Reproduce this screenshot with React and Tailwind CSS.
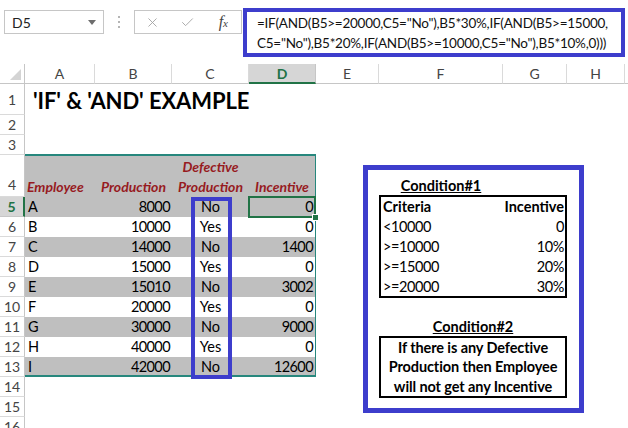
import React from "react";
import { X, Check } from "lucide-react";

const colHeads = [
  { t: "A", cls: "col-start-2" },
  { t: "B", cls: "col-start-3" },
  { t: "C", cls: "col-start-4" },
  { t: "D", cls: "col-start-5", sel: true },
  { t: "E", cls: "col-start-6" },
  { t: "F", cls: "col-start-7" },
  { t: "G", cls: "col-start-8" },
  { t: "H", cls: "col-start-9" },
];

const rowHeads = [
  { t: "1", cls: "row-start-2" },
  { t: "2", cls: "row-start-3" },
  { t: "3", cls: "row-start-4" },
  { t: "4", cls: "row-start-5", tall: true },
  { t: "5", cls: "row-start-6", sel: true },
  { t: "6", cls: "row-start-7" },
  { t: "7", cls: "row-start-8" },
  { t: "8", cls: "row-start-9" },
  { t: "9", cls: "row-start-10" },
  { t: "10", cls: "row-start-11" },
  { t: "11", cls: "row-start-12" },
  { t: "12", cls: "row-start-13" },
  { t: "13", cls: "row-start-14" },
  { t: "14", cls: "row-start-15" },
  { t: "15", cls: "row-start-16" },
  { t: "16", cls: "row-start-17" },
];

const data = [
  { e: "A", p: "8000", d: "No", i: "0", gray: true, cls: "row-start-6", sel: true },
  { e: "B", p: "10000", d: "Yes", i: "0", cls: "row-start-7" },
  { e: "C", p: "14000", d: "No", i: "1400", gray: true, cls: "row-start-8" },
  { e: "D", p: "15000", d: "Yes", i: "0", cls: "row-start-9" },
  { e: "E", p: "15010", d: "No", i: "3002", gray: true, cls: "row-start-10" },
  { e: "F", p: "20000", d: "Yes", i: "0", cls: "row-start-11" },
  { e: "G", p: "30000", d: "No", i: "9000", gray: true, cls: "row-start-12" },
  { e: "H", p: "40000", d: "Yes", i: "0", cls: "row-start-13" },
  { e: "I", p: "42000", d: "No", i: "12600", gray: true, cls: "row-start-14", last: true },
];

const criteria = [
  ["<10000", "0"],
  [">=10000", "10%"],
  [">=15000", "20%"],
  [">=20000", "30%"],
];

export default function App() {
  return (
    <div className="w-[628px] h-[428px] overflow-hidden bg-white text-black font-[family-name:Lato,sans-serif] text-[14px]">
      {/* Formula bar */}
      <div className="h-[64px] flex items-start">
        <div className="mt-[10px] ml-[4px] w-[100px] h-[24px] border border-[#c6c6c6] flex items-center justify-between pl-[7px] pr-[7px]">
          <span className="text-[14px] text-[#222]">D5</span>
          <svg width="8" height="5" viewBox="0 0 8 5">
            <path d="M0 0H8L4 5Z" fill="#6d6d6d" />
          </svg>
        </div>
        <div className="mt-[16px] ml-[14px] flex flex-col gap-[3px]">
          <div className="w-[2px] h-[2px] bg-[#b5b5b5]" />
          <div className="w-[2px] h-[2px] bg-[#b5b5b5]" />
          <div className="w-[2px] h-[2px] bg-[#b5b5b5]" />
        </div>
        <div className="mt-[10px] ml-[14px] w-[108px] h-[24px] border border-[#c6c6c6] flex items-center">
          <div className="w-[36px] flex justify-center">
            <X size={15} strokeWidth={1.4} color="#a0a0a0" />
          </div>
          <div className="w-[36px] flex justify-center">
            <Check size={15} strokeWidth={1.4} color="#a0a0a0" />
          </div>
          <div className="w-[36px] flex justify-center items-baseline font-[family-name:'Liberation_Serif',serif] italic text-[#444]">
            <span className="text-[16px]">f</span>
            <span className="text-[11px]">x</span>
          </div>
        </div>
        <div className="mt-[8px] ml-[1px] w-[382px] h-[49px] border-4 border-[#3d3dcc] pl-[10px] pt-[1px] text-[13.5px] leading-[20px] text-[#111] tracking-[-0.25px]">
          <div>=IF(AND(B5&gt;=20000,C5="No"),B5*30%,IF(AND(B5&gt;=15000,</div>
          <div>C5="No"),B5*20%,IF(AND(B5&gt;=10000,C5="No"),B5*10%,0)))</div>
        </div>
      </div>

      {/* Sheet grid */}
      <div className="grid grid-cols-[25px_70px_77px_77px_67px_63px_124px_64px_58px_1fr] grid-rows-[20px_31px_20px_20px_42px_repeat(12,20px)]">
        {/* corner */}
        <div className="col-start-1 row-start-1 border-r border-b border-[#c6c6c6] flex items-end justify-end pr-[3px] pb-[3px]">
          <svg width="11" height="11" viewBox="0 0 11 11">
            <path d="M11 0V11H0Z" fill="#d4d4d4" />
          </svg>
        </div>

        {colHeads.map((c) => (
          <div
            key={c.t}
            className={
              c.cls +
              " row-start-1 flex items-center justify-center text-[14px] " +
              (c.sel
                ? "bg-[#d6d6d6] border-b-2 border-b-[#217346] border-r border-r-[#c6c6c6] font-bold text-[#217346]"
                : "border-b border-b-[#c6c6c6] border-r border-r-[#dadada] text-[#444]")
            }
          >
            {c.t}
          </div>
        ))}
        <div className="col-start-10 row-start-1 border-b border-[#c6c6c6]" />

        {rowHeads.map((r) => (
          <div
            key={r.t}
            className={
              r.cls +
              " col-start-1 flex justify-center text-[14px] " +
              (r.tall ? "items-end pb-[1px] " : "items-center ") +
              (r.sel
                ? "bg-[#d6d6d6] border-r-2 border-r-[#217346] border-b border-b-[#c6c6c6] font-bold text-[#217346]"
                : "border-r border-r-[#c6c6c6] border-b border-b-[#dadada] text-[#444]")
            }
          >
            {r.t}
          </div>
        ))}

        {/* title */}
        <div className="col-start-2 col-span-6 row-start-2 flex items-center pl-[8px] pt-[1px] text-[22px] font-bold whitespace-nowrap tracking-[-0.1px]">
          'IF' &amp; 'AND' EXAMPLE
        </div>

        {/* table header */}
        <div className="col-start-2 col-span-4 row-start-5 -mt-[1px] grid grid-cols-[70px_77px_77px_1fr] bg-[#bfbfbf] border-t-2 border-r border-[#27877d] items-end font-bold italic text-[#971b1f] leading-[20px] text-[14px]">
          <div className="pl-[2px]">Employee</div>
          <div className="text-center">Production</div>
          <div className="text-center">
            <div>Defective</div>
            <div>Production</div>
          </div>
          <div className="text-center">Incentive</div>
        </div>

        {/* table rows */}
        {data.map((r) => (
          <div
            key={r.e}
            className={
              r.cls +
              " col-start-2 col-span-4 grid grid-cols-[70px_77px_77px_1fr] items-center leading-[20px] border-r border-[#27877d] text-[14.5px] " +
              (r.gray ? "bg-[#bfbfbf] " : "bg-white ") +
              (r.last ? "border-b-2" : "")
            }
          >
            <div className="pl-[3px]">{r.e}</div>
            <div className="text-right pr-[2px] tracking-[-0.6px]">{r.p}</div>
            <div className="text-center">{r.d}</div>
            {r.sel ? (
              <div className="relative h-full flex items-center justify-end pr-[2px] tracking-[-0.6px]">
                <span>{r.i}</span>
                <div className="absolute -left-[1px] -top-[1px] -right-[1px] -bottom-[1px] border-2 border-[#217346]" />
                <div className="absolute -right-[4px] -bottom-[4px] w-[7px] h-[7px] bg-[#217346] border border-white" />
              </div>
            ) : (
              <div className="text-right pr-[2px] tracking-[-0.6px]">{r.i}</div>
            )}
          </div>
        ))}

        {/* blue highlight on column C */}
        <div className="col-start-4 row-start-6 row-span-9 ml-[19px] w-[41px] -mb-[2px] border-4 border-[#3d3dcc]" />

        {/* Condition box */}
        <div className="col-start-6 col-span-4 row-start-5 row-span-12 ml-[47px] w-[221px] mt-[10px] mb-[4px] border-[5px] border-[#3d3dcc]" />

        <div className="col-start-7 row-start-5 flex items-end justify-center pb-[1px] font-bold underline leading-[20px] text-[14.5px]">
          Condition#1
        </div>

        <div className="col-start-7 col-span-2 row-start-6 row-span-5 -mt-[2px] -mb-[1px] border-2 border-black grid grid-rows-5 leading-[19px] text-[14.5px]">
          <div className="flex items-center justify-between pl-[2px] pr-[1px] font-bold">
            <span>Criteria</span>
            <span>Incentive</span>
          </div>
          {criteria.map(([a, b]) => (
            <div key={a} className="flex items-center justify-between pl-[2px] pr-[1px] tracking-[-0.4px]">
              <span>{a}</span>
              <span>{b}</span>
            </div>
          ))}
        </div>

        <div className="col-start-7 col-span-2 row-start-12 flex items-center justify-center font-bold underline text-[14.5px]">
          Condition#2
        </div>

        <div className="col-start-7 col-span-2 row-start-13 row-span-3 -mt-[1px] -mb-[1px] border-2 border-black flex flex-col items-center justify-center font-bold leading-[19.5px] text-[14.5px] tracking-[-0.1px]">
          <div>If there is any Defective</div>
          <div>Production then Employee</div>
          <div>will not get any Incentive</div>
        </div>
      </div>
    </div>
  );
}
